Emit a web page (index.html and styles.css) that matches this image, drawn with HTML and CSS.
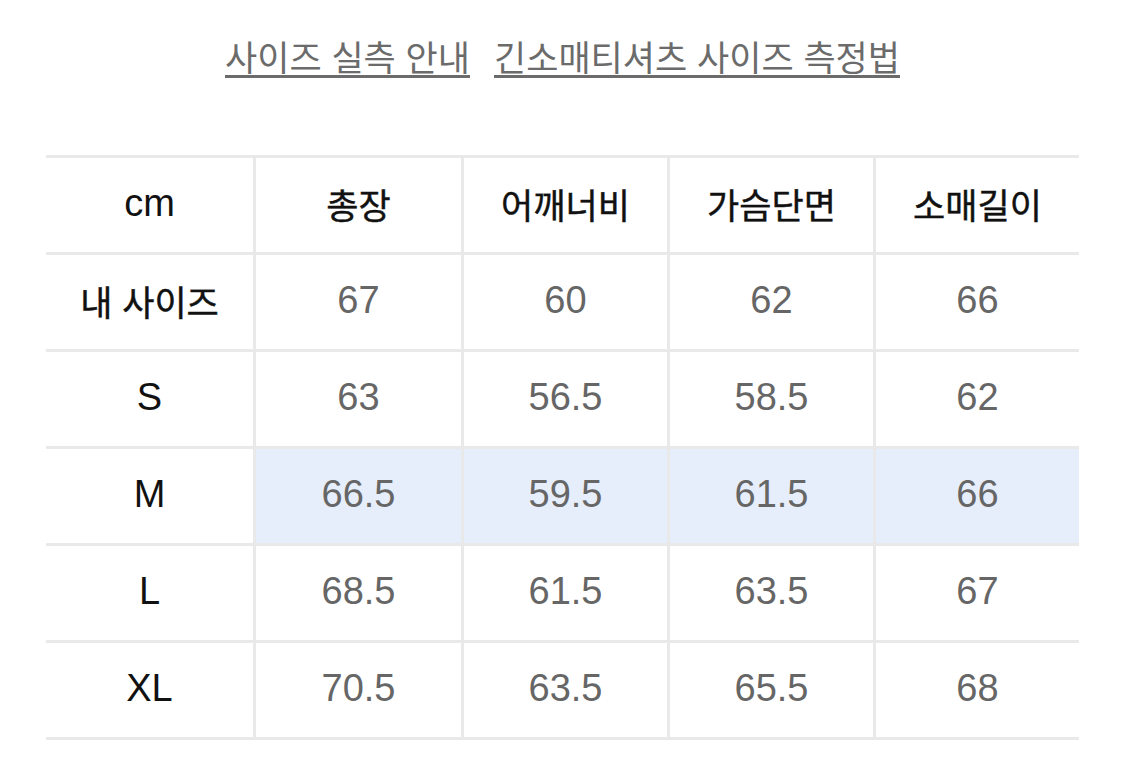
FILE: index.html
```html
<!DOCTYPE html>
<html lang="ko">
<head>
<meta charset="utf-8">
<title>사이즈 실측 안내</title>
<link rel="stylesheet" href="styles.css">
</head>
<body>
<div class="page">
  <nav class="links">
    <a class="link" href="#">사이즈 실측 안내</a>
    <a class="link" href="#">긴소매티셔츠 사이즈 측정법</a>
  </nav>
  <div class="size-table">
    <div class="cell label first-col">cm</div>
    <div class="cell head">총장</div>
    <div class="cell head">어깨너비</div>
    <div class="cell head">가슴단면</div>
    <div class="cell head">소매길이</div>

    <div class="cell label ko first-col">내 사이즈</div>
    <div class="cell val">67</div>
    <div class="cell val">60</div>
    <div class="cell val">62</div>
    <div class="cell val">66</div>

    <div class="cell label first-col">S</div>
    <div class="cell val">63</div>
    <div class="cell val">56.5</div>
    <div class="cell val">58.5</div>
    <div class="cell val">62</div>

    <div class="cell label first-col">M</div>
    <div class="cell val hl">66.5</div>
    <div class="cell val hl">59.5</div>
    <div class="cell val hl">61.5</div>
    <div class="cell val hl">66</div>

    <div class="cell label first-col">L</div>
    <div class="cell val">68.5</div>
    <div class="cell val">61.5</div>
    <div class="cell val">63.5</div>
    <div class="cell val">67</div>

    <div class="cell label first-col last">XL</div>
    <div class="cell val last">70.5</div>
    <div class="cell val last">63.5</div>
    <div class="cell val last">65.5</div>
    <div class="cell val last">68</div>
  </div>
</div>
</body>
</html>
```

FILE: styles.css
```css
html, body {
  margin: 0;
  padding: 0;
  background: #ffffff;
}

.page {
  width: 1125px;
  height: 781px;
  box-sizing: border-box;
  padding: 33px 46px 0 46px;
  font-family: "Liberation Sans", "Noto Sans CJK KR", sans-serif;
}

.links {
  display: flex;
  justify-content: center;
  gap: 24px;
  height: 49px;
  align-items: flex-start;
}

.link {
  font-family: "Noto Sans CJK KR", sans-serif;
  font-size: 35px;
  line-height: 46px;
  color: #6b6b6b;
  text-decoration: underline;
  text-decoration-thickness: 3px;
  text-underline-offset: 4px;
}

.size-table {
  margin-top: 73px;
  display: grid;
  grid-template-columns: 207px 208px 206px 206px 206px;
  grid-auto-rows: 97px;
}

.cell {
  display: flex;
  align-items: center;
  justify-content: center;
  border-top: 3px solid #e9e9e9;
  border-left: 3px solid #e9e9e9;
  box-sizing: border-box;
  font-size: 38px;
  color: #000;
  padding-bottom: 3px;
}

.cell.first-col {
  border-left: none;
}

.cell.last {
  height: 100px;
  border-bottom: 3px solid #e9e9e9;
}

.head,
.ko {
  font-family: "Noto Sans CJK KR", sans-serif;
  font-size: 35px;
  font-weight: 400;
  -webkit-text-stroke: 0.45px currentColor;
  color: #111;
}

.label {
  color: #111;
}

.val {
  color: #666;
}

.hl {
  background: #e7eefb;
}
```
